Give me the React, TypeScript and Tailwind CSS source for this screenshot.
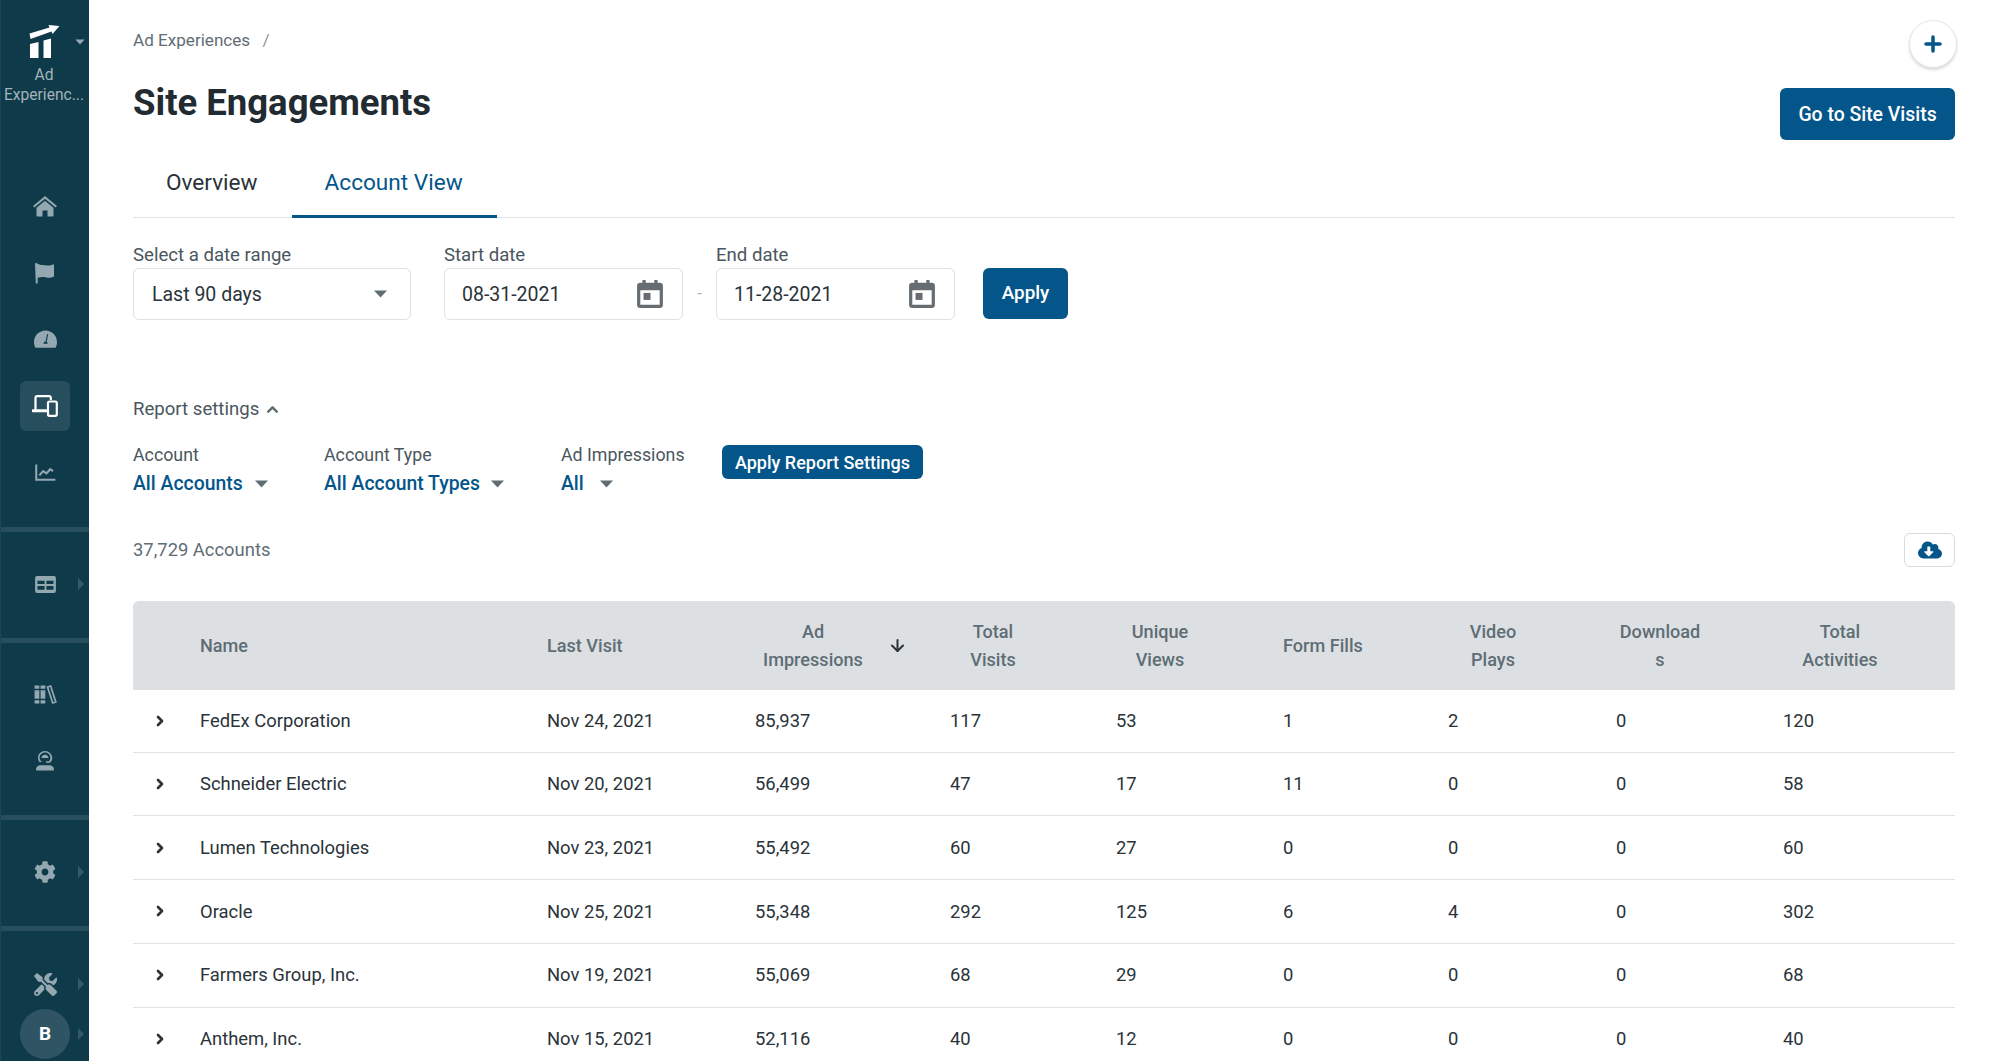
import { ArrowDown, ChevronRight, ChevronUp, Plus } from 'lucide-react';
import { FaCloudDownloadAlt, FaCog, FaTools } from 'react-icons/fa';

const rows = [
  ['FedEx Corporation', 'Nov 24, 2021', '85,937', '117', '53', '1', '2', '0', '120'],
  ['Schneider Electric', 'Nov 20, 2021', '56,499', '47', '17', '11', '0', '0', '58'],
  ['Lumen Technologies', 'Nov 23, 2021', '55,492', '60', '27', '0', '0', '0', '60'],
  ['Oracle', 'Nov 25, 2021', '55,348', '292', '125', '6', '4', '0', '302'],
  ['Farmers Group, Inc.', 'Nov 19, 2021', '55,069', '68', '29', '0', '0', '0', '68'],
  ['Anthem, Inc.', 'Nov 15, 2021', '52,116', '40', '12', '0', '0', '0', '40'],
];

function Caret({ className }: { className: string }) {
  return (
    <svg viewBox="0 0 14 8" className={className} fill="currentColor">
      <path d="M0.5 0.5h13L7 7.5z" />
    </svg>
  );
}

function LogoIcon() {
  return (
    <svg viewBox="0 0 30 33" className="w-[31px] h-[33px]" fill="#ffffff">
      <path d="M0 8.5 L20 2.5 L19 0 L30 1 L23 9 L22 6.5 L1 14z" />
      <path d="M0.5 19 L9 17 V33 H0.5z" />
      <path d="M14 15.5 L21.500 13.500 V33 H14z" />
    </svg>
  );
}

function HomeIcon() {
  return (
    <svg viewBox="0 0 24 21" className="w-[24px] h-[21px]" fill="currentColor">
      <path d="M12 0 24 10 22.700 11.500 12 2.700 1.300 11.500 0 10z" />
      <path d="M12 4.700 3.500 11.700V19.500a1 1 0 0 0 1 1H9.500v-6h5v6h5a1 1 0 0 0 1-1V11.700z" />
    </svg>
  );
}

function FlagIcon() {
  return (
    <svg viewBox="0 0 22 22" className="w-[22px] h-[22px]" fill="currentColor">
      <path d="M1 1.500a1.400 1.400 0 0 1 2.400 0.200c3 1.500 5 1 8 1.500 3 0.500 5 0.300 8.600-1v12.300c-3.600 1.600-5.600 1.400-8.600 0.700-3-0.600-5-0.300-7.700 0.500V21.500H1.800z" />
    </svg>
  );
}

function GaugeIcon() {
  return (
    <svg viewBox="0 0 24 18" className="w-[23px] h-[18px]" fill="currentColor">
      <path fillRule="evenodd" d="M12 0C5.400 0 0 5.300 0 12c0 2.200 0.500 4.300 1.500 6h21c1-1.700 1.500-3.800 1.500-6 0-6.700-5.400-12-12-12zM14.800 4.200 13.200 11.800c0.700 0.500 1.100 1.300 1.100 2.200H9.800c0-1.300 1-2.400 2.300-2.400l1.600-7.700z" />
    </svg>
  );
}

function DevicesIcon() {
  return (
    <svg viewBox="0 0 26 22" className="w-[26px] h-[22px]" fill="none" stroke="#ffffff" strokeWidth="2.200">
      <path d="M3.500 15V3a1.800 1.800 0 0 1 1.800-1.800H17a1.800 1.800 0 0 1 1.800 1.800v2" />
      <path d="M1 15.800h13" strokeWidth="3" strokeLinecap="round" />
      <rect x="16" y="6.500" width="8.800" height="14.300" rx="1.500" />
    </svg>
  );
}

function ChartIcon() {
  return (
    <svg viewBox="0 0 22 18" className="w-[21px] h-[17px]" fill="none" stroke="currentColor">
      <path d="M1.200 0.500V16.600H21.500" strokeWidth="2.200" />
      <path d="M4.500 12 8.500 7.500 12 10 16 5.500 19 7.500" strokeWidth="2.200" />
    </svg>
  );
}

function TableIcon() {
  return (
    <svg viewBox="0 0 22 18" className="w-[21px] h-[17px]" fill="currentColor">
      <path fillRule="evenodd" d="M2 0h18a2 2 0 0 1 2 2v14a2 2 0 0 1-2 2H2a2 2 0 0 1-2-2V2a2 2 0 0 1 2-2zM2.500 5v3.500h7.500V5zm9.500 0v3.500h7.500V5zM2.500 10.500V14.500h7.500v-4zm9.500 0v4h7.500v-4z" />
    </svg>
  );
}

function BooksIcon() {
  return (
    <svg viewBox="0 0 24 20" className="w-[23px] h-[19px]" fill="currentColor">
      <path d="M0.500 0.500h5v3.500h-5zM0.500 5.500h5v9h-5zM0.500 16h5v3.500h-5z" />
      <path d="M6.800 0.500h5v3.500h-5zM6.800 5.500h5v9h-5zM6.800 16h5v3.500h-5z" />
      <path fillRule="evenodd" d="M13 1.500 18 0l6 18.500-5 1.500zM15.200 2.700 20.200 18l1.600-0.500L16.800 2.200z" />
    </svg>
  );
}

function AgentIcon() {
  return (
    <svg viewBox="0 0 20 20" className="w-[20px] h-[20px]" fill="currentColor">
      <path d="M2 19.500c-0.500 0-1-0.500-1-1 0-2.500 2-4.200 4.500-4.200h9c2.500 0 4.500 1.700 4.500 4.200 0 0.500-0.500 1-1 1z" />
      <path fillRule="evenodd" d="M10 0c-4 0-7 3-7 6.800 0 1.600 0.500 3 1.400 4.200h2.800c-1.500-0.800-2.600-2.400-2.600-4.200C4.600 4 7 1.600 10 1.600s5.400 2.400 5.400 5.200c0 1.300-0.500 2.500-1.400 3.400h-3v1.600h4c1.400-1.300 2.300-3 2.300-5C17 3 14 0 10 0z" />
      <path d="M10 3.800c2 0 3.500 1.400 3.500 3.100H6.500c0-1.700 1.500-3.100 3.500-3.100z" />
    </svg>
  );
}

function CalendarIcon() {
  return (
    <svg viewBox="0 0 24 26" className="w-[26px] h-[28px] text-[#666d72]" fill="currentColor">
      <path fillRule="evenodd" d="M5 0h3v2.500h8V0h3v2.500h2a3 3 0 0 1 3 3V23a3 3 0 0 1-3 3H3a3 3 0 0 1-3-3V5.500a3 3 0 0 1 3-3h2zM3 9.500V23h18V9.500z" />
      <path d="M6 12h6.500v6.500H6z" />
    </svg>
  );
}

function NavItem({ children, active, sub }: { children: React.ReactNode; active?: boolean; sub?: boolean }) {
  return (
    <div className="relative h-[50px] flex items-center justify-center">
      <div className={`w-[50px] h-[50px] rounded-[6px] flex items-center justify-center ${active ? 'bg-[#264e5d]' : ''}`}>
        {children}
      </div>
      {sub && <span className="absolute left-[77px] top-[19px] border-y-[6px] border-y-transparent border-l-[6px] border-l-[#34596a]" />}
    </div>
  );
}

function Sidebar() {
  return (
    <aside className="w-[89px] shrink-0 h-[1061px] bg-[#0e3a4a] text-[#93a8b1] flex flex-col overflow-hidden border-l border-[#1d4656]">
      <div className="relative h-[181px] flex flex-col items-center pt-[25px] pr-[2px]">
        <LogoIcon />
        <span className="absolute left-[74px] top-[39px]">
          <Caret className="w-[10px] h-[6px] text-[#93a8b1]" />
        </span>
        <div className="mt-[7px] text-center text-[15.6px] leading-[20px] text-[#a3b4bb]">
          <div>Ad</div>
          <div>Experienc...</div>
        </div>
      </div>
      <div className="flex flex-col gap-[16.5px] pb-[30px]">
        <NavItem><HomeIcon /></NavItem>
        <NavItem><FlagIcon /></NavItem>
        <NavItem><GaugeIcon /></NavItem>
        <NavItem active><DevicesIcon /></NavItem>
        <NavItem><ChartIcon /></NavItem>
      </div>
      <div className="h-[5px] bg-[#264e5d]" />
      <div className="pt-[27px] pb-[29px]">
        <NavItem sub><TableIcon /></NavItem>
      </div>
      <div className="h-[5px] bg-[#264e5d]" />
      <div className="flex flex-col gap-[16.5px] pt-[26.5px] pb-[28.5px]">
        <NavItem><BooksIcon /></NavItem>
        <NavItem><AgentIcon /></NavItem>
      </div>
      <div className="h-[5px] bg-[#264e5d]" />
      <div className="pt-[27.5px] pb-[29px]">
        <NavItem sub><FaCog size={22} /></NavItem>
      </div>
      <div className="h-[5px] bg-[#264e5d]" />
      <div className="pt-[28px]">
        <NavItem sub><FaTools size={23} /></NavItem>
        <div className="relative h-[50px] flex items-center justify-center">
          <div className="w-[50px] h-[50px] rounded-full bg-[#2f5565] flex items-center justify-center text-white text-[19px] font-bold">B</div>
          <span className="absolute left-[77px] top-[19px] border-y-[6px] border-y-transparent border-l-[6px] border-l-[#34596a]" />
        </div>
      </div>
    </aside>
  );
}

function Label({ children }: { children: React.ReactNode }) {
  return <div className="text-[18.6px] leading-[24px] text-[#4a565d]">{children}</div>;
}

function DateField({ value }: { value: string }) {
  return (
    <div className="w-[239px] h-[52px] bg-white border border-[#dde2e5] rounded-[6px] flex items-center justify-between pl-[17px] pr-[19px] text-[19.5px] text-[#2a3339]">
      <span className="pt-[1px]">{value}</span>
      <CalendarIcon />
    </div>
  );
}

function ReportFilter({ label, value, gap }: { label: string; value: string; gap: string }) {
  return (
    <div>
      <div className="text-[17.8px] leading-[24px] text-[#4a565d]">{label}</div>
      <div className="mt-[5px] flex items-center text-[19.4px] leading-[24px] font-medium text-[#04568a]">
        {value}
        <Caret className={`w-[15px] h-[8px] text-[#5f6d75] ${gap}`} />
      </div>
    </div>
  );
}

function Th({ children, className }: { children: React.ReactNode; className: string }) {
  return (
    <th className="p-0 font-medium text-left align-middle">
      <div className={`leading-[28px] text-center ${className}`}>{children}</div>
    </th>
  );
}

export default function App() {
  return (
    <div className="flex h-[1061px] overflow-hidden bg-white font-['Roboto',sans-serif] text-[#2a3339]">
      <Sidebar />
      <main className="flex-1 min-w-0 px-[44px]">
        <div className="flex justify-between h-[150px] pt-[20px]">
          <div>
            <div className="mt-[9px] text-[17.1px] leading-[22px] text-[#5f6d75]">
              Ad Experiences <span className="ml-[8px] text-[#8a979e]">/</span>
            </div>
            <h1 className="mt-[30px] text-[36.5px] leading-[44px] font-bold text-[#212b31]">Site Engagements</h1>
          </div>
          <div className="flex flex-col items-end">
            <button className="w-[48px] h-[48px] -mr-[2px] rounded-full bg-white border border-[#e3e7e9] shadow-[0_2px_3px_rgba(0,0,0,0.15)] flex items-center justify-center text-[#04568a]">
              <Plus size={24} strokeWidth={3.5} />
            </button>
            <button className="mt-[20px] w-[175px] h-[52px] pt-[1px] rounded-[6px] bg-[#04568a] text-white text-[19.4px] font-medium">
              Go to Site Visits
            </button>
          </div>
        </div>

        <div className="flex h-[68px] border-b border-[#dfe4e6] text-[22.6px] leading-[28px]">
          <div className="pl-[33px] pr-[34px] pt-[19px] text-[#2a3339]">Overview</div>
          <div className="pl-[33px] pr-[34px] pt-[19px] h-[68px] border-b-[3px] border-[#04568a] text-[#04568a]">Account View</div>
        </div>

        <div className="flex items-end mt-[25px]">
          <div>
            <Label>Select a date range</Label>
            <div className="mt-[1px] w-[278px] h-[52px] border border-[#dde2e5] rounded-[6px] flex items-center justify-between pl-[18px] pr-[22px] text-[19.5px]">
              <span className="pt-[1px]">Last 90 days</span>
              <Caret className="w-[15px] h-[8px] text-[#5f6d75]" />
            </div>
          </div>
          <div className="ml-[33px]">
            <Label>Start date</Label>
            <div className="mt-[1px]"><DateField value="08-31-2021" /></div>
          </div>
          <div className="w-[33px] h-[52px] flex items-center justify-center text-[#a9b3b8] text-[17px]">-</div>
          <div>
            <Label>End date</Label>
            <div className="mt-[1px]"><DateField value="11-28-2021" /></div>
          </div>
          <button className="ml-[28px] mb-[1px] w-[85px] h-[51px] rounded-[6px] bg-[#04568a] text-white text-[18.9px] font-medium">
            Apply
          </button>
        </div>

        <div className="mt-[77px] flex items-center text-[18.6px] leading-[24px] text-[#4a565d]">
          Report settings
          <ChevronUp size={17} strokeWidth={3.5} className="ml-[5px] text-[#5f6d75]" />
        </div>

        <div className="mt-[22px] flex items-start">
          <div className="w-[191px]"><ReportFilter label="Account" value="All Accounts" gap="ml-[11px]" /></div>
          <div className="w-[237px]"><ReportFilter label="Account Type" value="All Account Types" gap="ml-[10px]" /></div>
          <div className="w-[161px]"><ReportFilter label="Ad Impressions" value="All" gap="ml-[15px]" /></div>
          <button className="mt-[2px] w-[201px] h-[34px] rounded-[6px] bg-[#04568a] text-white text-[18px] font-medium">
            Apply Report Settings
          </button>
        </div>

        <div className="mt-[37px] flex items-center justify-between h-[34px]">
          <span className="text-[18.4px] text-[#5f6d75]">37,729 Accounts</span>
          <button className="w-[51px] h-[34px] border border-[#d5dbde] rounded-[6px] flex items-center justify-center text-[#04568a]">
            <FaCloudDownloadAlt size={24} />
          </button>
        </div>

        <table className="mt-[34px] w-full table-fixed border-collapse text-[18.4px]">
          <colgroup>
            <col className="w-[67px]" />
            <col className="w-[347px]" />
            <col className="w-[208px]" />
            <col className="w-[195px]" />
            <col className="w-[166px]" />
            <col className="w-[167px]" />
            <col className="w-[165px]" />
            <col className="w-[168px]" />
            <col className="w-[167px]" />
            <col className="w-[172px]" />
          </colgroup>
          <thead className="text-[18.1px]">
            <tr className="h-[89px] bg-[#dce0e3] text-[#5f6d75]">
              <th className="p-0 rounded-tl-[6px]" />
              <Th className="text-left">Name</Th>
              <Th className="text-left">Last Visit</Th>
              <th className="p-0 font-medium text-left">
                <div className="flex items-center">
                  <div className="w-[116px] leading-[28px] text-center">Ad Impressions</div>
                  <ArrowDown size={19} strokeWidth={2.5} className="ml-[17px] text-[#2a3339]" />
                </div>
              </th>
              <Th className="w-[86px] break-words">Total Visits</Th>
              <Th className="w-[88px] break-words">Unique Views</Th>
              <Th className="text-left whitespace-nowrap">Form Fills</Th>
              <Th className="w-[90px] break-words">Video Plays</Th>
              <Th className="w-[88px] break-words">Downloads</Th>
              <th className="p-0 font-medium text-left rounded-tr-[6px]">
                <div className="w-[114px] leading-[28px] text-center">Total Activities</div>
              </th>
            </tr>
          </thead>
          <tbody>
            {rows.map((row) => (
              <tr key={row[0]} className="h-[63.8px] first:h-[62px] border-b border-[#dfe3e5]">
                <td className="p-0">
                  <ChevronRight size={16} strokeWidth={4} className="ml-[19px] text-[#2a3339]" />
                </td>
                {row.map((cell, i) => (
                  <td key={i} className="p-0">{cell}</td>
                ))}
              </tr>
            ))}
          </tbody>
        </table>
      </main>
    </div>
  );
}
